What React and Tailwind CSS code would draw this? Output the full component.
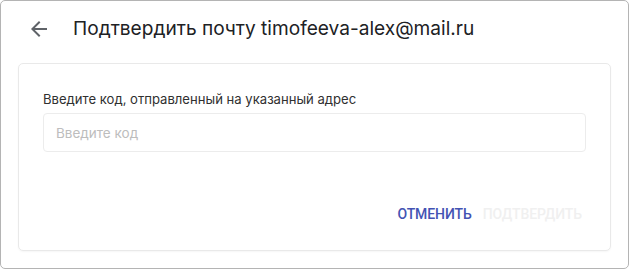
import React from "react";

const ArrowBack = () => (
  <svg className="h-6 w-6 text-[#5f6368]" viewBox="0 0 24 24" fill="currentColor">
    <path d="M20 11H7.83l5.59-5.59L12 4l-8 8 8 8 1.41-1.41L7.83 13H20v-2z" />
  </svg>
);

export default function App() {
  return (
    <div className="w-[630px] h-[270px] bg-white font-['Inter',_'Liberation_Sans',_sans-serif]">
      <div className="w-[629px] h-[269px] border border-[#b4b4b4] rounded-[5px] bg-white flex flex-col">
        {/* Шапка */}
        <div className="flex items-center h-[56px] pl-[26px]">
          <ArrowBack />
          <h1 className="ml-[22px] text-[19.1px] text-[#202124] leading-none">
            Подтвердить почту timofeeva-alex@mail.ru
          </h1>
        </div>

        {/* Карточка */}
        <div className="mx-[17px] mt-[6px] h-[188px] border border-[#e9e9e9] rounded-[5px] shadow-[0_1px_2px_rgba(0,0,0,0.04)] px-[24px] pt-[25px] flex flex-col">
          <label className="text-[13.1px] text-[#303030] leading-[20px]">
            Введите код, отправленный на указанный адрес
          </label>
          <input
            type="text"
            placeholder="Введите код"
            className="mt-[4px] h-[39px] w-full border border-[#ececec] rounded-[4px] px-[12px] text-[13.5px] placeholder:text-[#bdbdbd] outline-none"
          />
          <div className="mt-auto mb-[25px] flex justify-end items-center gap-[11px] pr-[4px] font-['Roboto',_sans-serif]">
            <button className="text-[14px] font-medium uppercase text-[#4353b3] tracking-[-0.1px]">
              Отменить
            </button>
            <button disabled className="text-[14px] font-medium uppercase text-[#f0f0f0] tracking-[-0.1px]">
              Подтвердить
            </button>
          </div>
        </div>
      </div>
    </div>
  );
}
